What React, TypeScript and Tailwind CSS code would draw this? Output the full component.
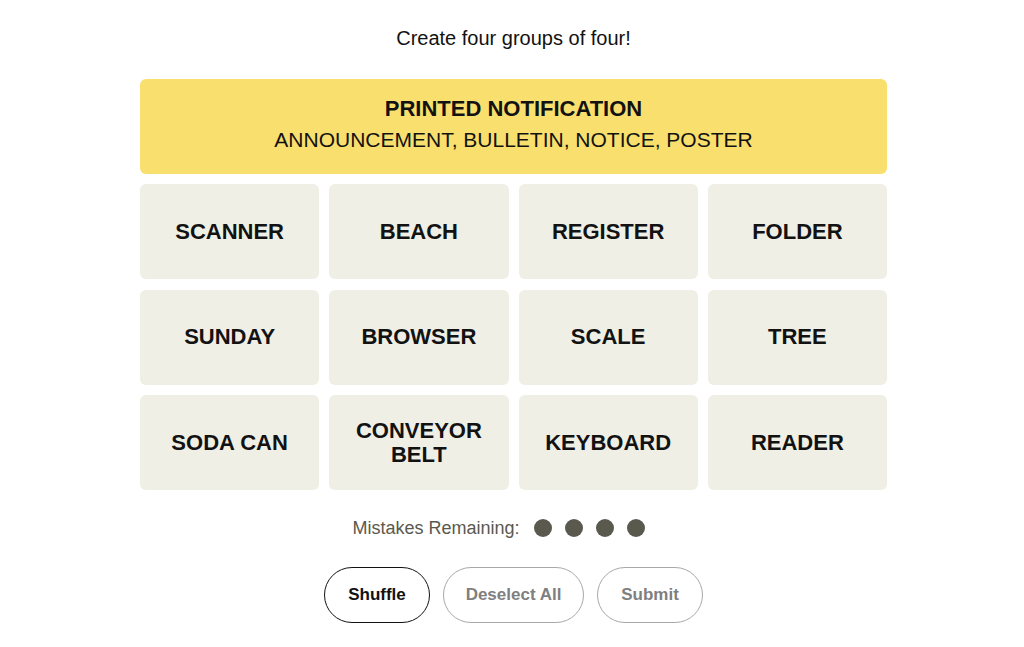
import React from 'react';

const words = [
  'SCANNER', 'BEACH', 'REGISTER', 'FOLDER',
  'SUNDAY', 'BROWSER', 'SCALE', 'TREE',
  'SODA CAN', 'CONVEYOR BELT', 'KEYBOARD', 'READER',
];

const App: React.FC = () => {
  return (
    <div className="min-h-screen bg-white text-[#121212] font-['Liberation_Sans',Arial,sans-serif]">
      <div className="w-[747px] ml-[140px] pt-[26px] flex flex-col items-center">
        {/* Header */}
        <p className="text-[20px] leading-6 h-6 mb-[29px]">Create four groups of four!</p>

        {/* Solved group */}
        <div className="w-full h-[95px] rounded-md bg-[#f9df6d] flex flex-col items-center pt-[18px]">
          <h3 className="text-[22px] font-bold leading-6">PRINTED NOTIFICATION</h3>
          <p className="text-[21px] leading-7 mt-[5px]">ANNOUNCEMENT, BULLETIN, NOTICE, POSTER</p>
        </div>

        {/* Tiles */}
        <div className="w-full grid grid-cols-4 gap-x-[10px] gap-y-[10.5px] mt-[10px]">
          {words.map((w) => (
            <button
              key={w}
              className="h-[95px] rounded-md bg-[#efefe6] flex items-center justify-center px-6 text-[22px] font-bold leading-[24px] text-center"
            >
              {w}
            </button>
          ))}
        </div>

        {/* Mistakes */}
        <div className="flex items-center mt-[26px] h-6 pr-[30px]">
          <span className="text-[18px] text-[#5a594e] mr-[14px]">Mistakes Remaining:</span>
          <div className="flex gap-[13px]">
            {[0, 1, 2, 3].map((i) => (
              <span key={i} className="w-[18px] h-[18px] rounded-full bg-[#5a594e]" />
            ))}
          </div>
        </div>

        {/* Controls */}
        <div className="flex gap-[13px] mt-[27px]">
          <button className="w-[106px] h-[56px] rounded-full border border-[#121212] text-[17px] font-bold">
            Shuffle
          </button>
          <button className="w-[141px] h-[56px] rounded-full border border-[#a8a8a8] text-[17px] font-bold text-[#7f7f7f]">
            Deselect All
          </button>
          <button className="w-[106px] h-[56px] rounded-full border border-[#a8a8a8] text-[17px] font-bold text-[#7f7f7f]">
            Submit
          </button>
        </div>
      </div>
    </div>
  );
};

export default App;
